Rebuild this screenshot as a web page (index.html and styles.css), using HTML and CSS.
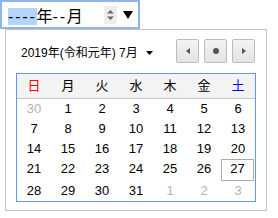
FILE: index.html
```html
<!DOCTYPE html>
<html lang="ja">
<head>
  <meta charset="UTF-8" />
  <title>月の選択</title>
  <link rel="stylesheet" href="styles.css">
</head>
<body>
  <div class="field">
    <span class="value"><span class="seg year sel">----</span>年<span class="seg month">--</span>月</span>
    <span class="spin">
      <svg width="9" height="14" viewBox="0 0 9 14"><path d="M1 5.5 L4.5 2 L8 5.5 Z M1 8.5 L4.5 12 L8 8.5 Z" fill="#666"/></svg>
    </span>
    <span class="drop">
      <svg width="10" height="8" viewBox="0 0 10 8"><path d="M0 0 H10 L5 8 Z" fill="#000"/></svg>
    </span>
  </div>

  <div class="picker">
    <div class="head">
      <div class="title">2019年(令和元年) 7月
        <svg class="caret" width="7" height="4" viewBox="0 0 7 4"><path d="M0 0 H7 L3.5 4 Z" fill="#000"/></svg>
      </div>
      <div class="nav">
        <button class="btn"><svg width="4" height="6" viewBox="0 0 4 6"><path d="M4 0 V6 L0 3 Z" fill="#555"/></svg></button>
        <button class="btn"><svg width="6" height="6" viewBox="0 0 6 6"><circle cx="3" cy="3" r="3" fill="#555"/></svg></button>
        <button class="btn"><svg width="4" height="6" viewBox="0 0 4 6"><path d="M0 0 V6 L4 3 Z" fill="#555"/></svg></button>
      </div>
    </div>

    <div class="cal">
      <div class="wk sun">日</div>
      <div class="wk">月</div>
      <div class="wk">火</div>
      <div class="wk">水</div>
      <div class="wk">木</div>
      <div class="wk">金</div>
      <div class="wk sat">土</div>

      <div class="day off">30</div>
      <div class="day">1</div>
      <div class="day">2</div>
      <div class="day">3</div>
      <div class="day">4</div>
      <div class="day">5</div>
      <div class="day">6</div>

      <div class="day">7</div>
      <div class="day">8</div>
      <div class="day">9</div>
      <div class="day">10</div>
      <div class="day">11</div>
      <div class="day">12</div>
      <div class="day">13</div>

      <div class="day">14</div>
      <div class="day">15</div>
      <div class="day">16</div>
      <div class="day">17</div>
      <div class="day">18</div>
      <div class="day">19</div>
      <div class="day">20</div>

      <div class="day">21</div>
      <div class="day">22</div>
      <div class="day">23</div>
      <div class="day">24</div>
      <div class="day">25</div>
      <div class="day">26</div>
      <div class="day today">27</div>

      <div class="day">28</div>
      <div class="day">29</div>
      <div class="day">30</div>
      <div class="day">31</div>
      <div class="day off">1</div>
      <div class="day off">2</div>
      <div class="day off">3</div>
    </div>
  </div>
</body>
</html>
```

FILE: styles.css
```css
body {
  margin: 0;
  background: #ffffff;
  font-family: "Liberation Sans", "Noto Sans CJK JP", sans-serif;
  color: #000;
}

/* input */
.field {
  display: flex;
  align-items: center;
  width: 140px;
  height: 29px;
  box-sizing: border-box;
  border: 2px solid #8fb3ee;
  padding-left: 6px;
  font-size: 16px;
}
.value {
  flex: 1;
  white-space: nowrap;
}
.seg {
  letter-spacing: 1.8px;
}
.sel {
  background: #b5d4fc;
}
.spin {
  display: flex;
  align-items: center;
  justify-content: center;
  width: 13px;
  height: 18px;
  background: #ededed;
  margin-right: 6px;
}
.drop {
  display: flex;
  width: 10px;
  margin-right: 5px;
}

/* popup */
.picker {
  margin-left: 5px;
  width: 262px;
  height: 182px;
  box-sizing: border-box;
  border: 1px solid #c4c4c4;
  padding: 9px 10px 0 10px;
  background: #fff;
}
.head {
  display: flex;
  align-items: center;
  height: 24px;
  margin-bottom: 10px;
}
.title {
  padding-left: 5px;
  font-size: 12px;
  white-space: nowrap;
}
.caret {
  margin-left: 5px;
  vertical-align: middle;
}
.nav {
  display: flex;
  gap: 5px;
  margin-left: auto;
  margin-right: 1px;
}
.btn {
  display: flex;
  align-items: center;
  justify-content: center;
  width: 23px;
  height: 24px;
  padding: 0;
  border: 1px solid #bcbcbc;
  border-radius: 2px;
  background: linear-gradient(#f3f3f3, #e3e3e3);
}

/* calendar */
.cal {
  display: grid;
  grid-template-columns: repeat(7, 1fr);
  border: 1px solid #6197ec;
  font-size: 13px;
}
.wk {
  height: 24px;
  line-height: 24px;
  text-align: center;
  background: #f3f3f3;
  border-bottom: 1px solid #c9c9c9;
}
.sun {
  color: #f00;
}
.sat {
  color: #00f;
}
.day {
  height: 20px;
  line-height: 20px;
  text-align: center;
}
.off {
  color: #b3b3b3;
}
.today {
  border: 1px solid #ababab;
  line-height: 18px;
  margin-right: 1px;
}
```
